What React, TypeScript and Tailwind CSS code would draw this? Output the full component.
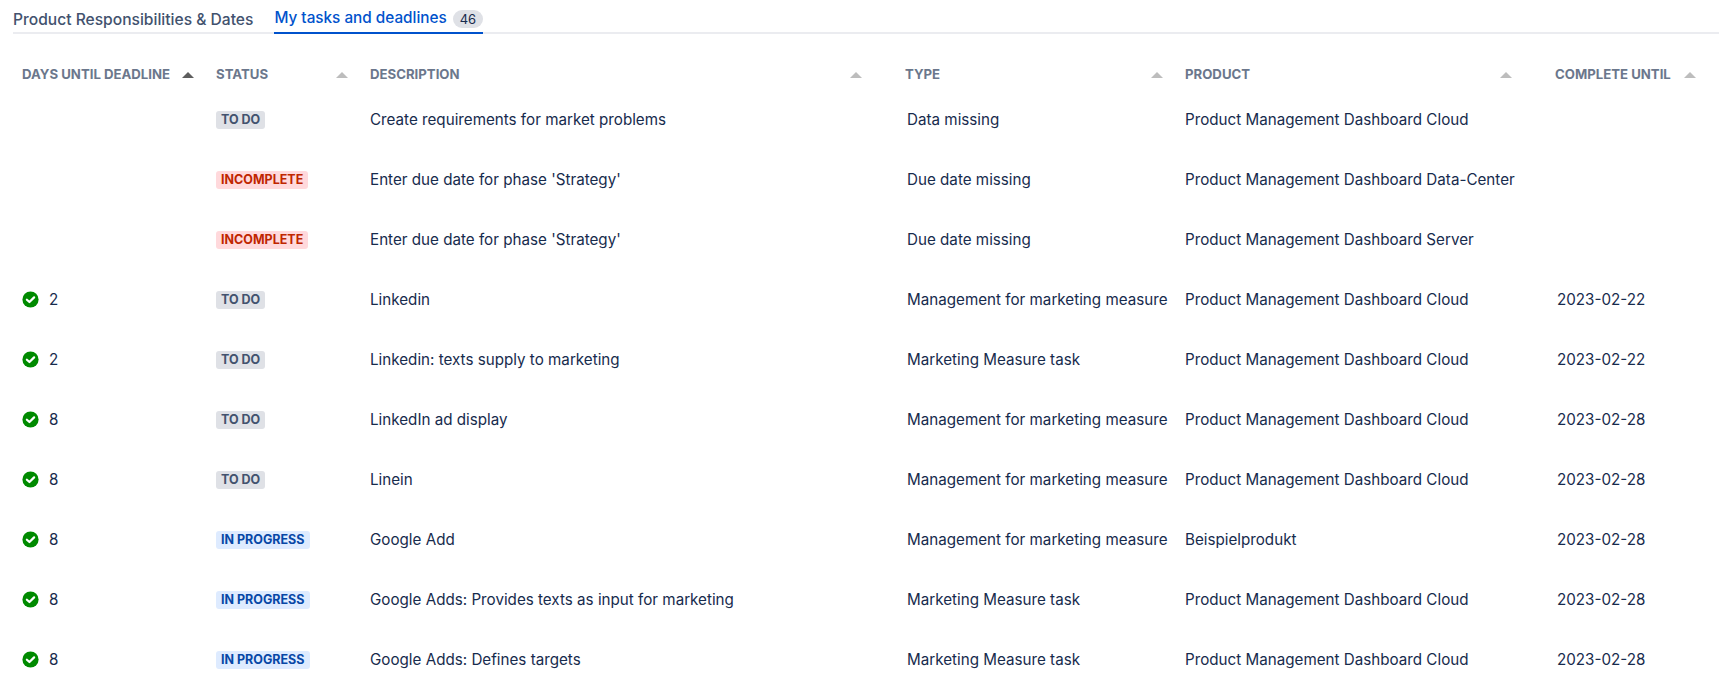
import { FC } from "react";

type Task = {
  days?: number;
  status: "TO DO" | "INCOMPLETE" | "IN PROGRESS";
  description: string;
  type: string;
  product: string;
  until?: string;
};

const tasks: Task[] = [
  { status: "TO DO", description: "Create requirements for market problems", type: "Data missing", product: "Product Management Dashboard Cloud" },
  { status: "INCOMPLETE", description: "Enter due date for phase 'Strategy'", type: "Due date missing", product: "Product Management Dashboard Data-Center" },
  { status: "INCOMPLETE", description: "Enter due date for phase 'Strategy'", type: "Due date missing", product: "Product Management Dashboard Server" },
  { days: 2, status: "TO DO", description: "Linkedin", type: "Management for marketing measure", product: "Product Management Dashboard Cloud", until: "2023-02-22" },
  { days: 2, status: "TO DO", description: "Linkedin: texts supply to marketing", type: "Marketing Measure task", product: "Product Management Dashboard Cloud", until: "2023-02-22" },
  { days: 8, status: "TO DO", description: "LinkedIn ad display", type: "Management for marketing measure", product: "Product Management Dashboard Cloud", until: "2023-02-28" },
  { days: 8, status: "TO DO", description: "Linein", type: "Management for marketing measure", product: "Product Management Dashboard Cloud", until: "2023-02-28" },
  { days: 8, status: "IN PROGRESS", description: "Google Add", type: "Management for marketing measure", product: "Beispielprodukt", until: "2023-02-28" },
  { days: 8, status: "IN PROGRESS", description: "Google Adds: Provides texts as input for marketing", type: "Marketing Measure task", product: "Product Management Dashboard Cloud", until: "2023-02-28" },
  { days: 8, status: "IN PROGRESS", description: "Google Adds: Defines targets", type: "Marketing Measure task", product: "Product Management Dashboard Cloud", until: "2023-02-28" },
];

const columns = [
  { label: "Days until deadline", active: true, pad: "pr-[22px]" },
  { label: "Status", pad: "pr-[22px]" },
  { label: "Description", pad: "pr-[43px]" },
  { label: "Type", pad: "pr-[22px]" },
  { label: "Product", pad: "pr-[43px]" },
  { label: "Complete until", pad: "pr-[22px]" },
];

const gridCols = "grid grid-cols-[194px_154px_535px_280px_370px_163px] pl-[22px]";

const badgeStyles: Record<Task["status"], string> = {
  "TO DO": "bg-[#dfe1e6] text-[#42526e]",
  INCOMPLETE: "bg-[#ffd9dc] text-[#bf2600]",
  "IN PROGRESS": "bg-[#deebff] text-[#0747a6]",
};

const CheckIcon: FC = () => (
  <svg width="17" height="17" viewBox="0 0 16 16" className="shrink-0">
    <circle cx="8" cy="8" r="7.6" fill="#008a00" />
    <path d="M4.6 8.2 7 10.4 11.4 6" fill="none" stroke="#fff" strokeWidth="2.1" strokeLinecap="round" strokeLinejoin="round" />
  </svg>
);

const SortArrow: FC<{ active?: boolean }> = ({ active }) => (
  <svg width="12" height="6" viewBox="0 0 12 6" className="shrink-0">
    <path d="M6 0 12 6H0Z" fill={active ? "#5e5e5e" : "#bdbdbd"} />
  </svg>
);

const App: FC = () => {
  return (
    <div className="h-[683px] w-[1732px] overflow-hidden bg-white font-['Inter',sans-serif] text-[15.2px] text-[#172b4d]">
      {/* Tabs */}
      <div className="mx-[13px] mt-[6px] flex h-[28px] gap-[21px] border-b-2 border-[#ebecf0]">
        <div className="flex h-[28px] items-center pt-[1px] pb-[2px] text-[15.6px] font-medium text-[#42526e]">
          Product Responsibilities &amp; Dates
        </div>
        <div className="flex h-[28px] items-center gap-[6px] border-b-2 border-[#0052cc] pt-[1px] pb-[2px] text-[15.3px] font-medium text-[#0052cc]">
          My tasks and deadlines
          <span className="rounded-full bg-[#dfe1e6] px-[7px] text-[13px] leading-[18px] font-normal text-[#172b4d]">46</span>
        </div>
      </div>

      {/* Table head */}
      <div className={`${gridCols} mt-[27px] h-[28px] items-center`}>
        {columns.map((col) => (
          <div key={col.label} className={`flex items-center justify-between gap-2 text-[13.2px] font-bold text-[#6b778c] uppercase ${col.pad}`}>
            <span className="whitespace-nowrap">{col.label}</span>
            <SortArrow active={col.active} />
          </div>
        ))}
      </div>

      {/* Rows */}
      <div className="mt-[1px]">
        {tasks.map((task, i) => (
          <div key={i} className={`${gridCols} h-[60px] items-center`}>
            <div className="flex items-center gap-[10px]">
              {task.days !== undefined && (
                <>
                  <CheckIcon />
                  <span>{task.days}</span>
                </>
              )}
            </div>
            <div className="flex items-center">
              <span className={`rounded-[3px] px-[5px] text-[12.5px] leading-[18px] font-bold ${badgeStyles[task.status]}`}>
                {task.status}
              </span>
            </div>
            <div className="whitespace-nowrap">{task.description}</div>
            <div className="pl-[2px] whitespace-nowrap">{task.type}</div>
            <div className="whitespace-nowrap">{task.product}</div>
            <div className="pl-[2px] whitespace-nowrap">{task.until}</div>
          </div>
        ))}
      </div>
    </div>
  );
};

export default App;
